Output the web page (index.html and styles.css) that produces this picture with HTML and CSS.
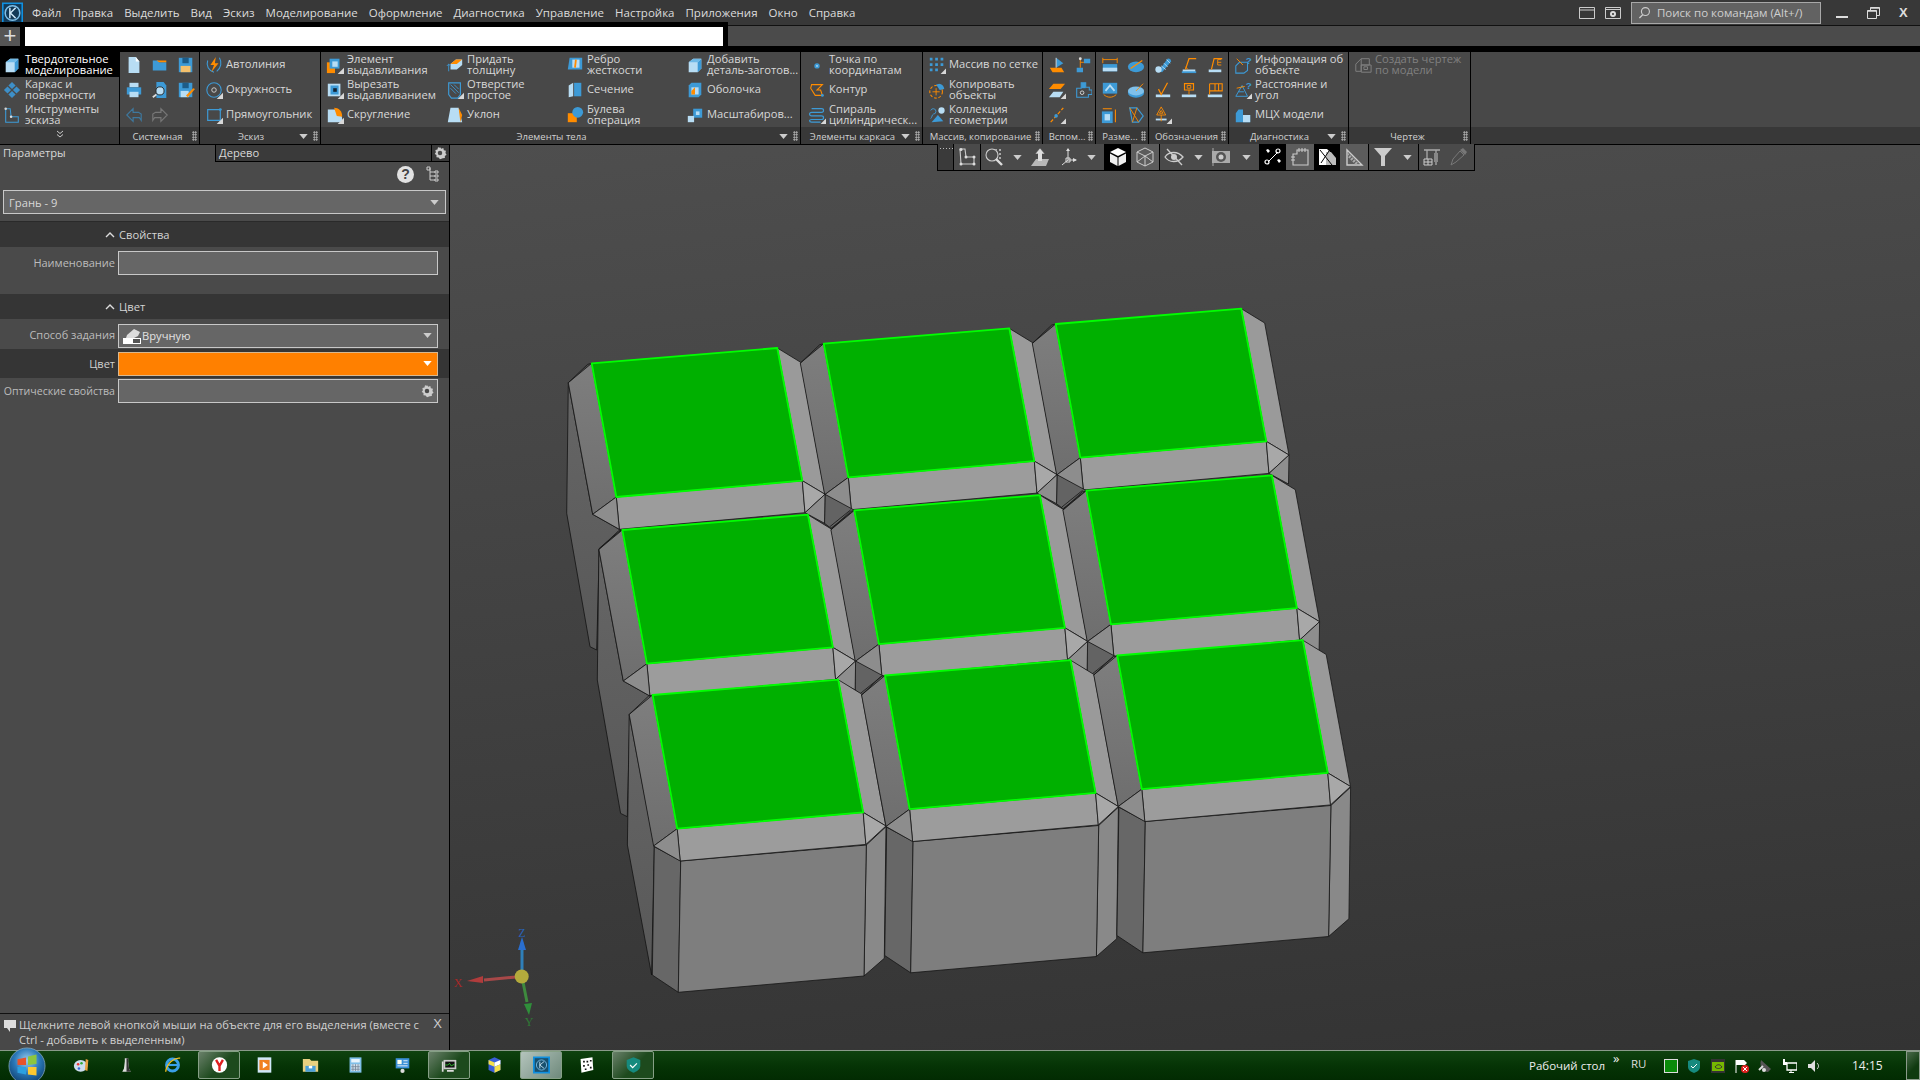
FILE: index.html
```html
<!DOCTYPE html>
<html lang="ru">
<head>
<meta charset="utf-8">
<title>КОМПАС-3D</title>
<link rel="stylesheet" href="styles.css">
</head>
<body>
<svg class="defs" width="0" height="0" aria-hidden="true">
<defs>
<symbol id="solid" viewBox="0 0 20 20"><path d="M3 7l5-4h9v11l-4 4H3z" fill="#b8ddf4"/><path d="M13 18V7l4-4v11z" fill="#3d9ad6"/><path d="M3 7l5-4h9l-4 4z" fill="#6fb9e6"/></symbol>
<symbol id="surf" viewBox="0 0 20 20"><g fill="#3d8fc8"><path d="M10 1l4 4-4 4-4-4z"/><path d="M15 6l4 4-4 4-4-4z"/><path d="M5 6l4 4-4 4-4-4z"/><path d="M10 11l4 4-4 4-4-4z"/></g></symbol>
<symbol id="sk" viewBox="0 0 20 20"><path d="M3 3h5l1 9h8v6H3z" fill="none" stroke="#3d9ad6" stroke-width="1.2"/><circle cx="3" cy="3" r="1.4" fill="#d5d5d5"/><circle cx="9" cy="12" r="1.4" fill="#ddd"/></symbol>
<symbol id="doc" viewBox="0 0 20 20"><path d="M4 1h8l4 5v13H4z" fill="#b8ddf4"/><path d="M12 1l4 5h-4z" fill="#fff"/></symbol>
<symbol id="open" viewBox="0 0 20 20"><path d="M2 5h6l1 2h8v9H2z" fill="#3d9ad6"/><path d="M6 5h11v2H9z" fill="#ff8c00"/></symbol>
<symbol id="save" viewBox="0 0 20 20"><path d="M2 2h15v16H2z" fill="#3d9ad6"/><path d="M6 2h7v6H6z" fill="#1d5c88"/><path d="M4 11h11v7H4z" fill="#f4c06c"/></symbol>
<symbol id="print" viewBox="0 0 20 20"><path d="M5 2h10v5H5z" fill="#b8ddf4"/><path d="M2 7h16v8H2z" fill="#3d9ad6"/><path d="M5 12h10v6H5z" fill="#b8ddf4"/></symbol>
<symbol id="prev" viewBox="0 0 20 20"><path d="M6 1h8l3 4v14H6z" fill="#3d9ad6"/><circle cx="10" cy="11" r="4.5" fill="#b8ddf4" stroke="#222"/><path d="M6 15l-4 3" stroke="#ddd" stroke-width="2"/></symbol>
<symbol id="saveas" viewBox="0 0 20 20"><path d="M2 2h15v16H2z" fill="#3d9ad6"/><path d="M6 2h7v6H6z" fill="#1d5c88"/><path d="M4 11h9v7H4z" fill="#b8ddf4"/><path d="M10 16l8-8 2 1-8 9z" fill="#ff8c00"/></symbol>
<symbol id="undo" viewBox="0 0 20 20"><path d="M9 3L2 10l7 7v-4h7l2 3v-7l-3-2H9z" fill="none" stroke="#3e789e" stroke-width="1.3"/></symbol>
<symbol id="redo" viewBox="0 0 20 20"><path d="M11 3l7 7-7 7v-4H4l-2 3v-7l3-2h6z" fill="none" stroke="#777" stroke-width="1.3"/></symbol>
<symbol id="auto" viewBox="0 0 20 20"><path d="M3 5c-2 6 1 11 7 13M16 2c3 5 2 11-3 15" fill="none" stroke="#3d9ad6" stroke-width="1.2"/><path d="M12 1L6 10h4l-3 8 8-10h-4z" fill="#ff8c00"/></symbol>
<symbol id="circ" viewBox="0 0 20 20"><circle cx="10" cy="10" r="8" fill="none" stroke="#3d9ad6" stroke-width="1.2"/><circle cx="10" cy="10" r="2.5" fill="none" stroke="#d5d5d5"/><path d="M20 13v7h-7z" fill="#d8d8d8"/></symbol>
<symbol id="rect" viewBox="0 0 20 20"><path d="M3 4h14v12H3z" fill="none" stroke="#3d9ad6" stroke-width="1.3"/><circle cx="17" cy="4" r="1.6" fill="#3d9ad6"/><path d="M20 13v7h-7z" fill="#d8d8d8"/></symbol>
<symbol id="ext" viewBox="0 0 20 20"><path d="M1 7h9v12H1z" fill="#ff8c00"/><path d="M4 3h11v11H4z" fill="#3d9ad6"/><path d="M7 6h6v6H7z" fill="#b8ddf4"/><path d="M20 13v7h-7z" fill="#d8d8d8"/></symbol>
<symbol id="cut" viewBox="0 0 20 20"><path d="M2 3h14v14H2z" fill="#b8ddf4"/><path d="M5 5h9v10H5z" fill="#3d9ad6"/><path d="M8 8h4v4H8z" fill="#123"/><path d="M20 13v7h-7z" fill="#d8d8d8"/></symbol>
<symbol id="fil" viewBox="0 0 20 20"><path d="M2 4h8c5 0 8 5 8 12v2H2z" fill="#b8ddf4"/><path d="M9 2c5 0 9 3 9 10l-6-1z" fill="#ff8c00"/><path d="M20 13v7h-7z" fill="#d8d8d8"/></symbol>
<symbol id="thick" viewBox="0 0 20 20"><path d="M5 9l6-5h7v6l-6 5H5z" fill="#b8ddf4"/><path d="M11 4h7l-6 5H5z" fill="#ff8c00"/><path d="M3 17V9M1 11l2-2 2 2" stroke="#3d9ad6" fill="none"/></symbol>
<symbol id="hole" viewBox="0 0 20 20"><path d="M3 2h13v13l-3 4H6l-3-4z" fill="none" stroke="#3d9ad6" stroke-width="1.3"/><path d="M5 4l9 9M9 4l5 5M5 8l6 6" stroke="#3d9ad6"/><path d="M20 13v7h-7z" fill="#d8d8d8"/></symbol>
<symbol id="draft" viewBox="0 0 20 20"><path d="M5 2h9l4 16H2z" fill="#b8ddf4"/><path d="M14 2l4 8-2 8z" fill="#ff8c00"/></symbol>
<symbol id="rib" viewBox="0 0 20 20"><path d="M4 2h14v13H2z" fill="#3d9ad6"/><path d="M7 4h8v9H7z" fill="#b8ddf4"/><path d="M11 4l-1 9" stroke="#ff8c00" stroke-width="2"/></symbol>
<symbol id="sec" viewBox="0 0 20 20"><path d="M3 5l5-3v15l-5 1z" fill="#b8ddf4"/><path d="M9 2h8v15H9z" fill="#3d9ad6"/></symbol>
<symbol id="bool" viewBox="0 0 20 20"><path d="M2 8h10v10H2z" fill="#ff8c00"/><circle cx="13" cy="7" r="6" fill="#3d9ad6"/></symbol>
<symbol id="add" viewBox="0 0 20 20"><path d="M3 7l5-4h9v11l-4 4H3z" fill="#b8ddf4"/><path d="M13 18V7l4-4v11z" fill="#3d9ad6"/><path d="M3 7l5-4h9l-4 4z" fill="#6fb9e6"/></symbol>
<symbol id="shell" viewBox="0 0 20 20"><path d="M3 5l3-3h11v13l-3 3H3z" fill="#3d9ad6"/><path d="M6 7h8v8H6z" fill="#b8ddf4"/><path d="M6 11l4-4v8H6z" fill="#ff8c00"/></symbol>
<symbol id="scale" viewBox="0 0 20 20"><path d="M8 3h10v10H8z" fill="#3d9ad6"/><path d="M11 6h4v4h-4z" fill="#b8ddf4"/><path d="M2 11h7v7H2z" fill="#b8ddf4"/></symbol>
<symbol id="pt" viewBox="0 0 20 20"><circle cx="10" cy="11" r="3" fill="#3d9ad6"/><circle cx="10" cy="11" r="1" fill="#b8ddf4"/></symbol>
<symbol id="cont" viewBox="0 0 20 20"><path d="M4 4h12L10 10h4l2 6H8L3 8z" fill="none" stroke="#ff8c00" stroke-width="1.2"/><circle cx="16" cy="16" r="1.6" fill="#3d9ad6"/></symbol>
<symbol id="spir" viewBox="0 0 20 20"><g fill="none" stroke="#3d9ad6" stroke-width="1.3"><path d="M4 3h11c3 0 3 4 0 4H4c-3 0-3 4 0 4h11c3 0 3 4 0 4H4c-3 0-3 3 0 3h10"/></g><path d="M20 14v6h-6z" fill="#d8d8d8"/></symbol>
<symbol id="grid" viewBox="0 0 20 20"><g fill="#3d9ad6"><path d="M2 2h3v3H2zM8 2h3v3H8zM14 2h3v3h-3zM2 8h3v3H2zM8 8h3v3H8zM14 8h3v3h-3zM2 14h3v3H2zM8 14h3v3H8z"/></g><path d="M20 14v6h-6z" fill="#d8d8d8"/></symbol>
<symbol id="copy" viewBox="0 0 20 20"><circle cx="9" cy="12" r="7" fill="none" stroke="#ff8c00" stroke-dasharray="3 2" stroke-width="1.2"/><path d="M9 4a6 6 0 0 1 9 5l-5 1z" fill="#3d9ad6"/><path d="M9 8v8M5 12h8" stroke="#ff8c00"/></symbol>
<symbol id="coll" viewBox="0 0 20 20"><circle cx="15" cy="5" r="3.5" fill="#b8ddf4"/><path d="M4 18l7-8 6 7z" fill="#3d9ad6"/><path d="M3 5a3 3 0 1 1 3 4c-2 1-1 3-3 5" fill="none" stroke="#3d9ad6"/></symbol>
<symbol id="a1" viewBox="0 0 20 20"><path d="M9 2v11l8-5-8-6z" fill="#3d9ad6"/><path d="M2 13h13l3 5H5z" fill="#ff8c00"/><path d="M9 2v11" stroke="#ddd"/></symbol>
<symbol id="a2" viewBox="0 0 20 20"><path d="M11 3h7v5h-7zM3 13h7v5H3z" fill="#3d9ad6"/><path d="M7 2v11M7 7h4" stroke="#ff8c00" fill="none"/><circle cx="7" cy="3" r="1.6" fill="#ddd"/></symbol>
<symbol id="a3" viewBox="0 0 20 20"><path d="M6 3h13l-5 6H1z" fill="#ff8c00"/><path d="M6 12h11l-4 6H1z" fill="#b8ddf4"/><path d="M20 14v6h-6z" fill="#d8d8d8"/></symbol>
<symbol id="a4" viewBox="0 0 20 20"><path d="M8 2h5v5h4v3l3 0v5h-4v3H3V8h5z" fill="none" stroke="#3d9ad6" stroke-width="1.2"/><path d="M8 2h5v6H8z" fill="#3d9ad6"/><circle cx="9" cy="13" r="2" fill="none" stroke="#ddd"/></symbol>
<symbol id="a5" viewBox="0 0 20 20"><path d="M3 18L17 2" stroke="#ff8c00" stroke-dasharray="4 2" stroke-width="1.3"/><circle cx="9" cy="11" r="2" fill="#3d9ad6"/><path d="M20 14v6h-6z" fill="#d8d8d8"/></symbol>
<symbol id="d1" viewBox="0 0 20 20"><path d="M2 9h16v8H2z" fill="#3d9ad6"/><path d="M2 13h16v4H2z" fill="#b8ddf4"/><path d="M2 2v6M18 2v6M2 4h16" stroke="#ff8c00" fill="none"/></symbol>
<symbol id="d2" viewBox="0 0 20 20"><ellipse cx="10" cy="12" rx="9" ry="6" fill="#3d9ad6"/><path d="M4 14L17 5" stroke="#ff8c00" stroke-width="1.4"/></symbol>
<symbol id="d3" viewBox="0 0 20 20"><path d="M2 2h16v12H2z" fill="#3d9ad6"/><path d="M5 11l5-6 5 6" stroke="#b8ddf4" stroke-width="2" fill="none"/><path d="M3 15c4 4 10 4 14 0" stroke="#ff8c00" fill="none"/></symbol>
<symbol id="d4" viewBox="0 0 20 20"><ellipse cx="10" cy="13" rx="9" ry="5.5" fill="#3d9ad6"/><ellipse cx="10" cy="11" rx="9" ry="5" fill="#7fc0ea"/><path d="M10 11L18 3" stroke="#ff8c00"/></symbol>
<symbol id="d5" viewBox="0 0 20 20"><path d="M1 6h12v13H1z" fill="#3d9ad6"/><path d="M4 9h6v7H4z" fill="#b8ddf4"/><path d="M2 3h10M16 4v14" stroke="#ff8c00" fill="none" stroke-width="1.2"/></symbol>
<symbol id="d6" viewBox="0 0 20 20"><path d="M3 2h8l7 9-5 7H6z" fill="none" stroke="#3d9ad6" stroke-width="1.3"/><path d="M3 2l10 16M11 2l-5 16" stroke="#ff8c00"/></symbol>
<symbol id="o1" viewBox="0 0 20 20"><path d="M5 17L15 3a3 3 0 0 1 4 3L9 18z" fill="#3d9ad6"/><path d="M8 11l5 4M11 8l4 4M14 4l4 4" stroke="#b8ddf4"/><circle cx="5" cy="15" r="3.5" fill="#b8ddf4"/></symbol>
<symbol id="o2" viewBox="0 0 20 20"><path d="M3 15h14v3H3z" fill="#b8ddf4"/><path d="M2 18h16" stroke="#3d9ad6" stroke-width="2"/><path d="M6 15l4-12h8" fill="none" stroke="#ff8c00" stroke-width="1.3"/><path d="M9 15l-3-3" stroke="#ff8c00"/></symbol>
<symbol id="o3" viewBox="0 0 20 20"><path d="M3 15h14v3H3z" fill="#b8ddf4"/><path d="M6 15l3-12h9" fill="none" stroke="#ff8c00" stroke-width="1.3"/><path d="M13 4h4M13 7h4M13 10h4M13 4v6" stroke="#ff8c00"/></symbol>
<symbol id="o4" viewBox="0 0 20 20"><path d="M2 15h16v3H2z" fill="#b8ddf4"/><path d="M5 9l3 6 7-13" fill="none" stroke="#ff8c00" stroke-width="1.4"/></symbol>
<symbol id="o5" viewBox="0 0 20 20"><path d="M2 15h16v3H2z" fill="#b8ddf4"/><path d="M5 3h10v7H5z" fill="none" stroke="#ff8c00" stroke-width="1.3"/><path d="M10 10v5M8 5h4v3H8z" stroke="#ff8c00" fill="none"/></symbol>
<symbol id="o6" viewBox="0 0 20 20"><path d="M2 15h16v3H2z" fill="#b8ddf4"/><path d="M4 3v12M4 3h14v8H4M10 3v8M14 3v8" fill="none" stroke="#ff8c00" stroke-width="1.2"/></symbol>
<symbol id="o7" viewBox="0 0 20 20"><path d="M2 14h12v2H2z" fill="#b8ddf4"/><path d="M8 1l-5 9h10zM8 5l-2 3h4z" fill="none" stroke="#ff8c00"/><path d="M8 10v7" stroke="#ff8c00"/><path d="M20 14v6h-6z" fill="#d8d8d8"/></symbol>
<symbol id="i1" viewBox="0 0 20 20"><path d="M2 11l4-4h9v9l-4 3H2z" fill="none" stroke="#3d9ad6" stroke-width="1.2"/><path d="M3 3l7 7" stroke="#ff8c00"/><text x="13" y="9" font-size="11" font-weight="700" fill="#3d9ad6" font-family="Liberation Sans">?</text></symbol>
<symbol id="i2" viewBox="0 0 20 20"><path d="M2 17L9 5l6 12zM5 12h6" fill="none" stroke="#3d9ad6" stroke-width="1.1"/><path d="M3 8l9-2" stroke="#ff8c00"/><text x="13" y="9" font-size="11" font-weight="700" fill="#3d9ad6" font-family="Liberation Sans">?</text><path d="M20 14v6h-6z" fill="#d8d8d8"/></symbol>
<symbol id="i3" viewBox="0 0 20 20"><path d="M2 8l3-4h5v6h8v8H2z" fill="#3d9ad6"/><path d="M10 10h8v8h-8z" fill="#b8ddf4"/></symbol>
<symbol id="draw" viewBox="0 0 20 20"><g fill="none" stroke="#808080" stroke-width="1.1"><path d="M2 9l6-6v14H2zM8 3h9v7h-9M8 10h11v8H8zM11 12h4v3h-4z"/></g></symbol>
<symbol id="dd" viewBox="0 0 10 6"><path d="M0 0h10L5 6z" fill="#ccc"/></symbol>
<symbol id="gear" viewBox="0 0 16 16"><path d="M8 1l1.4 2 2.4-.6.6 2.4 2.4.7-.6 2.5 1.3 2-2 1.3.1 2.5-2.5.2L8 15l-1.6-1.9-2.5-.2.1-2.5-2-1.3 1.3-2-.6-2.5 2.4-.7.6-2.4 2.4.6z" fill="#ccc"/><circle cx="8" cy="8" r="2.6" fill="#4a4a4a"/></symbol>
<symbol id="t1" viewBox="0 0 20 20"><path d="M3 2h5l1 8h8v7H4z" fill="none" stroke="#ccc" stroke-width="1.1"/><g fill="#ddd"><circle cx="4" cy="2.5" r="1.5"/><circle cx="9" cy="10" r="1.5"/><circle cx="17" cy="10" r="1.5"/><circle cx="17" cy="17" r="1.5"/><circle cx="4" cy="17" r="1.5"/></g></symbol>
<symbol id="t2" viewBox="0 0 20 20"><circle cx="8" cy="8" r="6" fill="none" stroke="#ccc" stroke-width="1.1"/><path d="M12 12l6 6" stroke="#ddd" stroke-width="2.4"/><path d="M15 2h2v2h-2zM15 6h2v2h-2zM15 10h2v2h-2zM11 2h2v2h-2z" fill="#aaa"/></symbol>
<symbol id="t3" viewBox="0 0 20 20"><path d="M10 1l5 6h-3v6H8V7H5z" fill="#ddd" stroke="#4a4a4a" stroke-width=".6"/><path d="M6 12h13l-3 7H1z" fill="#b8b8b8"/><path d="M8 7h4v7H8z" fill="#ddd"/></symbol>
<symbol id="t4" viewBox="0 0 20 20"><path d="M10 2v11M10 13h8M10 13l-6 5" stroke="#ddd" fill="none"/><path d="M8 4l2-3 2 3zM15 11l4 2-4 2z" fill="#ddd"/><path d="M8 11h4v4H8z" fill="none" stroke="#ddd"/></symbol>
<symbol id="cube" viewBox="0 0 20 20"><path d="M10 1l8 4-8 4-8-4z" fill="#fff"/><path d="M2 6.500l7.500 4V19L2 15z" fill="#eee"/><path d="M18 6.500l-7.500 4V19l7.500-4z" fill="#eee"/></symbol>
<symbol id="wire" viewBox="0 0 20 20"><path d="M10 1l8 4v10l-8 4-8-4V5zM2 5l8 4 8-4M10 9v10M2 15l8-6M18 15l-8-6" fill="none" stroke="#ccc"/></symbol>
<symbol id="eye" viewBox="0 0 20 20"><path d="M1 10c4-6 13-6 18 0-5 6-14 6-18 0z" fill="none" stroke="#ccc" stroke-width="1.3"/><circle cx="10" cy="10" r="3" fill="#ccc"/><path d="M3 2l15 16" stroke="#ccc" stroke-width="1.3"/></symbol>
<symbol id="cam" viewBox="0 0 20 20"><path d="M1 4h18v12H1z" fill="#aaa"/><path d="M2 1v4M2 15v4" stroke="#aaa"/><circle cx="10" cy="10" r="5" fill="#555"/><circle cx="10" cy="10" r="2.500" fill="#ccc"/></symbol>
<symbol id="link" viewBox="0 0 20 20"><path d="M5 15L15 5" stroke="#fff"/><g fill="none" stroke="#fff" stroke-width="1.2"><circle cx="15" cy="4" r="2"/><circle cx="4" cy="15" r="2"/></g><path d="M3 3l2-1 2 2-2 2zM14 13l2-1 2 2-2 2z" fill="#fff"/></symbol>
<symbol id="book" viewBox="0 0 20 20"><path d="M3 7h4V3h11v15H3z" fill="none" stroke="#ccc" stroke-width="1.1"/><path d="M9 1v4M12 1v4M15 1v4M1 10h4M1 13h4" stroke="#ccc"/></symbol>
<symbol id="brick" viewBox="0 0 20 20"><path d="M2 2h8l5 5v11H2z" fill="#fff"/><path d="M9 5h5l5 6v7H9z" fill="#bbb"/><path d="M3 3l12 15M4 16l8-12" stroke="#000"/></symbol>
<symbol id="ang" viewBox="0 0 20 20"><path d="M3 3v15h15z" fill="none" stroke="#ccc" stroke-width="1.4"/><path d="M3 7l11 11" stroke="#aaa" stroke-width="3" stroke-dasharray="2 1"/></symbol>
<symbol id="filt" viewBox="0 0 20 20"><path d="M1 1h18l-7 8v10H8V9z" fill="#ccc"/></symbol>
<symbol id="crane" viewBox="0 0 20 20"><path d="M2 3h16M5 3v9M14 3v15" stroke="#aaa" fill="none" stroke-width="1.3"/><path d="M2 12h8v6H2z" fill="none" stroke="#ccc"/><path d="M2 15h8M6 12v6" stroke="#ccc"/><path d="M12 6h4v9h-4z" fill="#888"/></symbol>
<symbol id="pip" viewBox="0 0 20 20"><path d="M3 18l2-6 7-8 4 4-8 7z" fill="none" stroke="#777"/><path d="M12 3l3-2 4 4-2 3z" fill="#777"/></symbol>
<symbol id="grp" viewBox="0 0 16 16"><g fill="none" stroke="#ccc"><path d="M4 2v12M4 6h5M4 10h5M4 14h5"/><path d="M1 1h3v3H1zM9 5h3v2H9zM9 9h3v2H9zM9 13h3v2H9z"/></g></symbol>
</defs>
</svg>

<div class="app">
  <header class="menubar">
    <svg class="logo" viewBox="0 0 20 20"><path d="M0 0h20v20H0z" fill="#1090e0"/><path d="M1.500 1.500h17v17h-17z" fill="#123a58"/><circle cx="10" cy="10" r="7" fill="none" stroke="#7fc0ea" stroke-width="1.4"/><path d="M7.500 5v10M13 5l-5 5 5 5" fill="none" stroke="#cfe8f8" stroke-width="1.4"/></svg>
    <nav class="menu">
      <span>Файл</span><span>Правка</span><span>Выделить</span><span>Вид</span><span>Эскиз</span><span>Моделирование</span><span>Оформление</span><span>Диагностика</span><span>Управление</span><span>Настройка</span><span>Приложения</span><span>Окно</span><span>Справка</span>
    </nav>
    <div class="winside">
      <svg class="wi" viewBox="0 0 16 12"><path d="M.5.500h15v11H.5zM.5 3h15" fill="none" stroke="#ccc"/></svg>
      <svg class="wi wi2" viewBox="0 0 16 12"><path d="M.5.500h15v11H.5z" fill="none" stroke="#ccc"/><path d="M.5 2.500h15" stroke="#ccc"/><circle cx="8" cy="7" r="3" fill="#ddd"/><circle cx="8" cy="7" r="1" fill="#333"/></svg>
      <div class="search"><svg class="mag" viewBox="0 0 14 14"><circle cx="8" cy="6" r="4.300" fill="none" stroke="#ccc" stroke-width="1.2"/><path d="M5 9.500L1.500 13" stroke="#ccc" stroke-width="1.4"/></svg><span>Поиск по командам (Alt+/)</span></div>
      <div class="winbtns">
        <svg class="min" viewBox="0 0 12 12"><path d="M0 10h12" stroke="#ddd" stroke-width="2"/></svg>
        <svg class="max" viewBox="0 0 13 12"><path d="M.5 3.500h9v8h-9zM3.500 3.500V.500h9v8h-3" fill="none" stroke="#ddd"/><path d="M.5 4h9M3.500 1h9" stroke="#ddd" stroke-width="1.500"/></svg>
        <span class="close">X</span>
      </div>
    </div>
  </header>

  <div class="tabbar">
    <div class="tabwrap">
      <div class="plus">+</div>
      <div class="docfield"></div>
    </div>
  </div>

  <div class="ribbon">
    <div class="modes">
      <div class="mode active"><svg class="i"><use href="#solid"/></svg><span>Твердотельное моделирование</span></div>
      <div class="mode"><svg class="i"><use href="#surf"/></svg><span>Каркас и<br>поверхности</span></div>
      <div class="mode"><svg class="i"><use href="#sk"/></svg><span>Инструменты<br>эскиза</span></div>
      <div class="modes-foot"><svg class="chev" viewBox="0 0 8 8"><path d="M1 1l3 2.500L7 1M1 4.500L4 7l3-2.500" fill="none" stroke="#ccc"/></svg></div>
    </div>

    <section class="sec s-sys">
      <div class="body g-sys">
        <svg class="i"><use href="#doc"/></svg><svg class="i"><use href="#print"/></svg><svg class="i"><use href="#undo"/></svg>
        <svg class="i"><use href="#open"/></svg><svg class="i"><use href="#prev"/></svg><svg class="i"><use href="#redo"/></svg>
        <svg class="i"><use href="#save"/></svg><svg class="i"><use href="#saveas"/></svg>
      </div>
      <div class="foot"><span class="lbl">Системная</span><i class="grip"></i></div>
    </section>

    <section class="sec s-skz">
      <div class="body g-col" >
        <div class="ri"><svg class="i"><use href="#auto"/></svg><span>Автолиния</span></div>
        <div class="ri"><svg class="i"><use href="#circ"/></svg><span>Окружность</span></div>
        <div class="ri"><svg class="i"><use href="#rect"/></svg><span>Прямоугольник</span></div>
      </div>
      <div class="foot"><span class="lbl">Эскиз</span><svg class="dd"><use href="#dd"/></svg><i class="grip"></i></div>
    </section>

    <section class="sec s-el">
      <div class="body g-el">
        <div class="ri"><svg class="i"><use href="#ext"/></svg><span>Элемент<br>выдавливания</span></div>
        <div class="ri"><svg class="i"><use href="#cut"/></svg><span>Вырезать<br>выдавливанием</span></div>
        <div class="ri"><svg class="i"><use href="#fil"/></svg><span>Скругление</span></div>
        <div class="ri"><svg class="i"><use href="#thick"/></svg><span>Придать<br>толщину</span></div>
        <div class="ri"><svg class="i"><use href="#hole"/></svg><span>Отверстие<br>простое</span></div>
        <div class="ri"><svg class="i"><use href="#draft"/></svg><span>Уклон</span></div>
        <div class="ri"><svg class="i"><use href="#rib"/></svg><span>Ребро<br>жесткости</span></div>
        <div class="ri"><svg class="i"><use href="#sec"/></svg><span>Сечение</span></div>
        <div class="ri"><svg class="i"><use href="#bool"/></svg><span>Булева<br>операция</span></div>
        <div class="ri"><svg class="i"><use href="#add"/></svg><span>Добавить<br>деталь-заготов...</span></div>
        <div class="ri"><svg class="i"><use href="#shell"/></svg><span>Оболочка</span></div>
        <div class="ri"><svg class="i"><use href="#scale"/></svg><span>Масштабиров...</span></div>
      </div>
      <div class="foot"><span class="lbl">Элементы тела</span><svg class="dd"><use href="#dd"/></svg><i class="grip"></i></div>
    </section>

    <section class="sec s-kar">
      <div class="body g-col">
        <div class="ri"><svg class="i"><use href="#pt"/></svg><span>Точка по<br>координатам</span></div>
        <div class="ri"><svg class="i"><use href="#cont"/></svg><span>Контур</span></div>
        <div class="ri"><svg class="i"><use href="#spir"/></svg><span>Спираль<br>цилиндрическ...</span></div>
      </div>
      <div class="foot"><span class="lbl">Элементы каркаса</span><svg class="dd"><use href="#dd"/></svg><i class="grip"></i></div>
    </section>

    <section class="sec s-mas">
      <div class="body g-col">
        <div class="ri"><svg class="i"><use href="#grid"/></svg><span>Массив по сетке</span></div>
        <div class="ri"><svg class="i"><use href="#copy"/></svg><span>Копировать<br>объекты</span></div>
        <div class="ri"><svg class="i"><use href="#coll"/></svg><span>Коллекция<br>геометрии</span></div>
      </div>
      <div class="foot"><span class="lbl">Массив, копирование</span><i class="grip"></i></div>
    </section>

    <section class="sec s-vs">
      <div class="body g-ico2">
        <svg class="i"><use href="#a1"/></svg><svg class="i"><use href="#a3"/></svg><svg class="i"><use href="#a5"/></svg>
        <svg class="i"><use href="#a2"/></svg><svg class="i"><use href="#a4"/></svg>
      </div>
      <div class="foot"><span class="lbl">Вспом...</span><i class="grip"></i></div>
    </section>

    <section class="sec s-vs">
      <div class="body g-ico2">
        <svg class="i"><use href="#d1"/></svg><svg class="i"><use href="#d3"/></svg><svg class="i"><use href="#d5"/></svg>
        <svg class="i"><use href="#d2"/></svg><svg class="i"><use href="#d4"/></svg><svg class="i"><use href="#d6"/></svg>
      </div>
      <div class="foot"><span class="lbl">Разме...</span><i class="grip"></i></div>
    </section>

    <section class="sec s-obo">
      <div class="body g-ico3">
        <svg class="i"><use href="#o1"/></svg><svg class="i"><use href="#o4"/></svg><svg class="i"><use href="#o7"/></svg>
        <svg class="i"><use href="#o2"/></svg><svg class="i"><use href="#o5"/></svg><span></span>
        <svg class="i"><use href="#o3"/></svg><svg class="i"><use href="#o6"/></svg>
      </div>
      <div class="foot"><span class="lbl">Обозначения</span><i class="grip"></i></div>
    </section>

    <section class="sec s-dia">
      <div class="body g-col">
        <div class="ri"><svg class="i"><use href="#i1"/></svg><span>Информация об<br>объекте</span></div>
        <div class="ri"><svg class="i"><use href="#i2"/></svg><span>Расстояние и<br>угол</span></div>
        <div class="ri"><svg class="i"><use href="#i3"/></svg><span>МЦХ модели</span></div>
      </div>
      <div class="foot"><span class="lbl">Диагностика</span><svg class="dd"><use href="#dd"/></svg><i class="grip"></i></div>
    </section>

    <section class="sec s-dra">
      <div class="body g-col">
        <div class="ri off"><svg class="i"><use href="#draw"/></svg><span>Создать чертеж<br>по модели</span></div>
      </div>
      <div class="foot"><span class="lbl">Чертеж</span><i class="grip"></i></div>
    </section>
    <div class="rib-rest"><div class="rest-foot"></div></div>
  </div>

  <main class="work">
    <aside class="panel">
      <div class="ptabs">
        <div class="ptab on">Параметры</div>
        <div class="ptab">Дерево</div>
        <div class="pgear"><svg class="gear"><use href="#gear"/></svg></div>
      </div>
      <div class="ptools">
        <span class="help">?</span>
        <svg class="grp"><use href="#grp"/></svg>
      </div>
      <div class="combo face"><span>Грань - 9</span><svg class="dd"><use href="#dd"/></svg></div>
      <div class="sep"></div>
      <div class="phead"><svg class="up" viewBox="0 0 10 6"><path d="M1 5l4-4 4 4" fill="none" stroke="#ddd" stroke-width="1.400"/></svg>Свойства</div>
      <div class="prow name"><label>Наименование</label><div class="field"></div></div>
      <div class="gap"></div>
      <div class="phead"><svg class="up" viewBox="0 0 10 6"><path d="M1 5l4-4 4 4" fill="none" stroke="#ddd" stroke-width="1.400"/></svg>Цвет</div>
      <div class="prow way"><label>Способ задания</label>
        <div class="field combo"><svg class="bk" viewBox="0 0 20 16"><path d="M5 7l7-6 6 3-2 4-4 2H4z" fill="#ddd"/><path d="M1 10h18v6H1z" fill="#fff"/><path d="M11 11h7v4h-7z" fill="#555"/></svg><span class="val">Вручную</span><svg class="dd"><use href="#dd"/></svg></div>
      </div>
      <div class="prow colr"><label>Цвет</label><div class="field orange"><svg class="dd white"><use href="#dd"/></svg></div></div>
      <div class="prow opt"><label>Оптические свойства</label><div class="field combo"><svg class="gear g2"><use href="#gear"/></svg></div></div>
      <div class="pfill"></div>
      <div class="hint">
        <svg class="bubble" viewBox="0 0 12 12"><path d="M0 0h12v8H6v4L3 8H0z" fill="#ddd"/></svg>
        <p>Щелкните левой кнопкой мыши на объекте для его выделения (вместе с Ctrl - добавить к выделенным)</p>
        <span class="hx">X</span>
      </div>
    </aside>

    <section class="view">
      <div class="vtools">
        <div class="vgrip"></div>
        <div class="vgroup"><b class="vb"><svg class="vi"><use href="#t1"/></svg></b></div>
        <div class="vgroup g123">
          <b class="vb"><svg class="vi"><use href="#t2"/></svg></b><b class="vd"><svg class="dd"><use href="#dd"/></svg></b>
          <b class="vb"><svg class="vi"><use href="#t3"/></svg></b>
          <b class="vb vb-sp"><svg class="vi"><use href="#t4"/></svg></b><b class="vd"><svg class="dd"><use href="#dd"/></svg></b>
        </div>
        <div class="vgroup g-view">
          <b class="vb act"><svg class="vi"><use href="#cube"/></svg></b>
          <b class="vb hi wide"><svg class="vi"><use href="#wire"/></svg></b>
        </div>
        <div class="vgroup g100">
          <b class="vb wide"><svg class="vi"><use href="#eye"/></svg></b><b class="vd"><svg class="dd"><use href="#dd"/></svg></b>
          <b class="vb"><svg class="vi"><use href="#cam"/></svg></b><b class="vd vd-sp"><svg class="dd"><use href="#dd"/></svg></b>
        </div>
        <div class="vgroup">
          <b class="vb act"><svg class="vi"><use href="#link"/></svg></b>
          <b class="vb hi wide"><svg class="vi"><use href="#book"/></svg></b>
          <b class="vb act"><svg class="vi"><use href="#brick"/></svg></b>
          <b class="vb hi wide"><svg class="vi"><use href="#ang"/></svg></b>
        </div>
        <div class="vgroup g-filt">
          <b class="vb wide"><svg class="vi"><use href="#filt"/></svg></b><b class="vd"><svg class="dd"><use href="#dd"/></svg></b>
        </div>
        <div class="vgroup last">
          <b class="vb"><svg class="vi"><use href="#crane"/></svg></b>
          <b class="vb"><svg class="vi"><use href="#pip"/></svg></b>
        </div>
      </div>

      <svg class="scene" viewBox="450 145 1470 905">
        <defs>
          <linearGradient id="gl" x1="0" y1="0" x2="0" y2="1"><stop offset="0" stop-color="#7e7e7e"/><stop offset="1" stop-color="#6e6e6e"/></linearGradient>
          <linearGradient id="gs" x1="0" y1="0" x2="0" y2="1"><stop offset="0" stop-color="#666"/><stop offset="1" stop-color="#585858"/></linearGradient>
          <g id="side" stroke="#111" stroke-width=".8" stroke-linejoin="round"><polygon points="-23.4,19.4 -25,150 -1.7,283.4 5,286.7 7.600,185 29.300,166.700 27.600,166 1,151" fill="url(#gs)"/></g>
          <g id="side3" stroke="#111" stroke-width=".8" stroke-linejoin="round"><polygon points="-23.4,19.4 -25.200,150 -1,280 1.700,151.700" fill="url(#gs)"/></g>
          <g id="cell" stroke="#151515" stroke-width=".8" stroke-linejoin="round">
            <polygon points="0,0 -23.400,19.400 1,151 24.600,133.700" fill="url(#gl)"/>
            <polyline points="-23.400,19.400 -4,1 0,0" fill="none"/>
            <polygon points="185.600,-15.300 209,-1 233.300,131 210.600,117.400" fill="#9a9a9a"/>
            <polygon points="24.600,133.700 210.600,117.400 213.300,149.400 27.600,166" fill="#9c9c9c"/>
            <polygon points="24.600,133.700 1,151 27.600,166" fill="#8d8d8d"/>
            <polygon points="210.600,117.400 233.300,131 213.300,149.400" fill="#a8a8a8"/>
            <polygon points="0,0 185.600,-15.300 210.600,117.400 24.600,133.700" fill="#00b000" stroke="#00ff00" stroke-width="1.800"/>
          </g>
          <g id="facetL" stroke="#151515" stroke-width=".8" stroke-linejoin="round"><polygon points="213.300,149.400 233.300,131 232.800,160" fill="#8e8e8e"/></g>
          <g id="facetR" stroke="#151515" stroke-width=".8" stroke-linejoin="round"><polygon points="233.300,131 262.300,146.700 239.300,165 232.800,160" fill="#636363"/><polyline points="259,146.500 238,163.500" fill="none"/></g>
          <g id="front" stroke="#151515" stroke-width=".8" stroke-linejoin="round">
            <polygon points="1.700,151.700 28.100,166 25.700,297.300 -.3,280" fill="#676767"/>
            <polygon points="213.700,150 233.400,131.700 231.700,263.300 211.400,281" fill="#898989"/>
            <polygon points="28.100,166 213.700,150 211.400,281 25.700,297.300" fill="#7e7e7e"/>
          </g>
        </defs>

        <use href="#side" x="591.700" y="363.300"/>
        <use href="#side" x="622.300" y="530"/>
        <use href="#side3" x="652.600" y="695"/>

        <use href="#cell" x="591.700" y="363.300"/><use href="#cell" x="823.700" y="343.700"/><use href="#cell" x="1055.700" y="324"/>
        <use href="#facetR" x="591.700" y="363.300"/><use href="#facetL" x="591.700" y="363.300"/>
        <use href="#facetR" x="823.700" y="343.700"/><use href="#facetL" x="823.700" y="343.700"/>
        <use href="#facetL" x="1055.700" y="324"/>

        <use href="#cell" x="622.300" y="530"/><use href="#cell" x="854.300" y="510.400"/><use href="#cell" x="1086.300" y="490.700"/>
        <use href="#facetR" x="622.300" y="530"/><use href="#facetL" x="622.300" y="530"/>
        <use href="#facetR" x="854.300" y="510.400"/><use href="#facetL" x="854.300" y="510.400"/>
        <use href="#facetL" x="1086.300" y="490.700"/>

        <use href="#front" x="652.600" y="695"/><use href="#front" x="885" y="675.500"/><use href="#front" x="1117.200" y="655.500"/>
        <use href="#cell" x="652.600" y="695"/><use href="#cell" x="885" y="675.500"/><use href="#cell" x="1117.200" y="655.500"/>

        <g class="triad">
          <path d="M522 970V950" stroke="#2f7fb8" stroke-width="3"/><path d="M522 937l4 13h-8z" fill="#2a6fd0"/>
          <path d="M516 977l-32 3" stroke="#a84848" stroke-width="3"/><path d="M467 981l16-5v7z" fill="#b03c3c"/>
          <path d="M523 982l4 20" stroke="#3e8a3e" stroke-width="3"/><path d="M529 1015l-5-11 8-1z" fill="#2f8f3a"/>
          <circle cx="521.700" cy="976.500" r="7" fill="#b3aa3c"/>
          <text x="522" y="937" class="ax az">Z</text>
          <text x="458" y="987" class="ax ar">X</text>
          <text x="529" y="1026" class="ax ag">Y</text>
        </g>
      </svg>
    </section>
  </main>

  <footer class="taskbar">
    <svg class="orb" viewBox="0 0 40 40"><defs><radialGradient id="og" cx=".5" cy=".35" r=".7"><stop offset="0" stop-color="#9fd0f0"/><stop offset=".5" stop-color="#2a78b8"/><stop offset="1" stop-color="#0c3a68"/></radialGradient></defs><circle cx="20" cy="20" r="19" fill="url(#og)" stroke="#8ab" stroke-width=".8"/><path d="M10 13l9-2v8h-9z" fill="#e8532b"/><path d="M21 10l9-2v10l-9 1z" fill="#8cc63f"/><path d="M10 21h9v8l-9-2z" fill="#2ba0e0"/><path d="M21 21h9v9l-9-1z" fill="#fdc82f"/></svg>
    <div class="tb">
      <svg class="tk tb-a" viewBox="0 0 20 20"><ellipse cx="9" cy="11" rx="8" ry="7" fill="#cde"/><circle cx="6" cy="9" r="1.500" fill="#e33"/><circle cx="10" cy="8" r="1.500" fill="#3a3"/><circle cx="7" cy="14" r="1.500" fill="#36d"/><path d="M15 3l3 1-1 13-3-1z" fill="#e8a040"/></svg>
      <svg class="tk tb-b" viewBox="0 0 20 20"><path d="M8 2h4v4l1 8 2 4H5l2-4 1-8z" fill="#ddd"/><path d="M10 2h2v4l1 8 2 4h-5z" fill="#333"/></svg>
      <svg class="tk tb-c" viewBox="0 0 20 20"><circle cx="10" cy="10" r="7" fill="none" stroke="#3aa0e8" stroke-width="3.500"/><path d="M4 10h13" stroke="#3aa0e8" stroke-width="2.500"/><path d="M2 18C3 8 12 1 19 2" fill="none" stroke="#f4c020" stroke-width="1.500"/></svg>
      <div class="tbtn tb-d"><svg class="tk" viewBox="0 0 20 20"><circle cx="10" cy="10" r="9" fill="#fff"/><path d="M6 4l4 7 4-7M10 11v6" stroke="#e02020" stroke-width="2.800" fill="none"/></svg></div>
      <svg class="tk tb-e" viewBox="0 0 20 20"><path d="M2 1h16v18H2z" fill="#d0e8f8"/><path d="M4 4h12v12H4z" fill="#f08020"/><path d="M8 6l6 4-6 4z" fill="#fff"/></svg>
      <svg class="tk tb-f" viewBox="0 0 20 20"><path d="M1 3h8l2 2h8v13H1z" fill="#e8d080"/><path d="M4 11h12v7H4z" fill="#4a9fd8"/><path d="M8 11h4v3H8z" fill="#fff"/></svg>
      <svg class="tk tb-g" viewBox="0 0 20 20"><path d="M3 1h14v18H3z" fill="#7fbfe8"/><path d="M5 3h10v4H5z" fill="#e8f4fc"/><path d="M5 9h10v8H5z" fill="#d0e0ec"/><path d="M7 9v8M10 9v8M13 9v8M5 12h10M5 15h10" stroke="#789"/></svg>
      <svg class="tk tb-h" viewBox="0 0 20 20"><path d="M2 2h16v12H2z" fill="#3a90d8"/><path d="M4 4h5v5H4z" fill="#ffe"/><path d="M11 5h5M11 8h5M4 11h12" stroke="#fff"/><circle cx="10" cy="17" r="2.500" fill="#ddd"/></svg>
      <div class="tbtn tb-i"><svg class="tk" viewBox="0 0 20 20"><path d="M3 4h15v11H3z" fill="#ccc"/><path d="M5 6h11v7H5z" fill="#111"/><path d="M5 10l3 0 2-2 2 3 4-2" stroke="#3c3" fill="none"/><path d="M1 6h2v12H1zM7 16h8v2H7z" fill="#ddd"/></svg></div>
      <svg class="tk tb-j" viewBox="0 0 20 20"><path d="M10 1l7 3v12l-7 3-7-3V4z" fill="#3a5fd8"/><path d="M3 4l7 3v5l-7-3z" fill="#f4e04a"/><path d="M17 4l-7 3v5l7-3z" fill="#fff"/><path d="M10 12l7-3v7l-7 3z" fill="#f4e04a"/></svg>
      <div class="tbtn on tb-k"><svg class="tk" viewBox="0 0 20 20"><path d="M0 0h20v20H0z" fill="#1090e0"/><path d="M2 2h16v16H2z" fill="#18506e"/><circle cx="10" cy="10" r="6" fill="none" stroke="#7fc0ea"/><path d="M8 6v8M13 6l-5 4 5 4" fill="none" stroke="#cfe8f8"/></svg></div>
      <svg class="tk tb-l" viewBox="0 0 20 20"><path d="M3 3l14-2 1 15-14 3z" fill="#fff"/><path d="M6 5h2v2H6zM10 5h2v2h-2zM14 4h2v2h-2zM6 10h2v2H6zM11 9h2v2h-2zM8 14h2v2H8zM14 12h2v2h-2z" fill="#111"/></svg>
      <div class="tbtn tb-m"><svg class="tk" viewBox="0 0 20 20"><path d="M10 1l8 3v7c0 4-4 7-8 8-4-1-8-4-8-8V4z" fill="#168a7e"/><path d="M6 10l3 3 5-5" stroke="#fff" fill="none" stroke-width="1.400"/></svg></div>
    </div>
    <div class="tray">
      <span class="desk">Рабочий стол</span>
      <span class="more">»</span>
      <span class="ru">RU</span>
      <svg class="ts t1" viewBox="0 0 14 14"><path d="M0 0h14v14H0z" fill="#ddd"/><path d="M1 1h12v12H1z" fill="#0a8a0a"/></svg>
      <svg class="ts t2" viewBox="0 0 14 14"><path d="M7 0l6 2v6c0 3-3 5-6 6-3-1-6-3-6-6V2z" fill="#168a7e"/><path d="M4 7l2 2 4-4" stroke="#fff" fill="none"/></svg>
      <svg class="ts t3" viewBox="0 0 14 14"><path d="M0 0h14v14H0z" fill="#333"/><path d="M1 3h12v9H1z" fill="#76b900"/><path d="M4 8c2-3 5-3 7 0-2 2-5 2-7 0z" fill="none" stroke="#333"/></svg>
      <svg class="ts t4" viewBox="0 0 14 14"><path d="M1 1v13" stroke="#fff"/><path d="M1 1h8l3 3-2 2H1z" fill="#fff"/><circle cx="10" cy="10" r="4" fill="#e02020"/><path d="M8 8l4 4M12 8l-4 4" stroke="#fff"/></svg>
      <svg class="ts t5" viewBox="0 0 14 14"><path d="M3 1l10 9-3 3c-5 0-9-5-7-12z" fill="#555"/><path d="M1 11l4-4" stroke="#ddd" stroke-width="2"/><circle cx="6" cy="11" r="2" fill="#ddd"/></svg>
      <svg class="ts t6" viewBox="0 0 14 14"><path d="M4 4h10v7H4z" fill="none" stroke="#fff" stroke-width="1.300"/><path d="M8 11v2M6 13.500h5" stroke="#fff"/><path d="M0 0h2v3h2v3H0z" fill="#fff"/></svg>
      <svg class="ts t7" viewBox="0 0 14 14"><path d="M0 5h3l4-4v12L3 9H0z" fill="#ddd"/><path d="M9 4c2 2 2 4 0 6" stroke="#ddd" fill="none"/></svg>
      <span class="clock">14:15</span>
      <div class="showdesk"></div>
    </div>
  </footer>
</div>
</body>
</html>
```
FILE: styles.css
```css
* { box-sizing: border-box; }
html, body { margin: 0; height: 100%; }
body { background: #333; font-family: "Open Sans", "Noto Sans", sans-serif; font-size: 11.5px; color: #d8d8d8; overflow: hidden; }
.defs { position: absolute; }
.app { width: 1920px; height: 1080px; display: flex; flex-direction: column; }

/* title / menu */
.menubar { height: 26px; flex: none; display: flex; align-items: center; background: #383838; border-bottom: 1px solid #111; padding-left: 2px; }
.logo { width: 21px; height: 22px; flex: none; }
.menu { display: flex; gap: 11px; margin-left: 9px; color: #dcdcdc; white-space: nowrap; }
.winside { margin-left: auto; display: flex; align-items: center; height: 100%; }
.wi { width: 16px; height: 12px; }
.wi2 { margin-left: 10px; }
.search { width: 190px; height: 22px; margin-left: 10px; background: #626262; border: 1px solid #a8a8a8; display: flex; align-items: center; gap: 6px; padding-left: 6px; color: #cfcfcf; }
.mag { width: 13px; height: 13px; }
.winbtns { display: flex; align-items: center; width: 99px; padding-left: 15px; gap: 19px; }
.min { width: 12px; height: 12px; }
.max { width: 13px; height: 12px; }
.close { font: 700 13px "Liberation Sans", sans-serif; color: #ddd; }

/* doc tabs */
.tabbar { height: 26px; flex: none; background: #4b4b4b; border-bottom: 6px solid #000; }
.tabwrap { width: 728px; height: 24px; margin-top: -4px; padding: 5px 5px 0 0; background: #000; display: flex; gap: 5px; }
.plus { width: 20px; background: #555; color: #ddd; font: 400 22px/18px "Liberation Sans", sans-serif; text-align: center; }
.docfield { flex: 1; background: #fff; }

/* ribbon */
.ribbon { height: 93px; flex: none; display: flex; background: #484848; border-bottom: 1px solid #000; font-size: 11.2px; }
.modes { width: 120px; flex: none; display: grid; grid-template-rows: 25px 25px 25px 17px; border-right: 1px solid #000; }
.mode { display: flex; align-items: center; gap: 4px; padding-left: 3px; line-height: 11px; color: #d8d8d8; }
.mode span { margin-top: -2px; }
.mode.active { background: #000; color: #fff; }
.modes-foot { background: #383838; display: flex; justify-content: center; align-items: center; }
.chev { width: 8px; height: 8px; margin-top: -4px; }
.i { width: 18px; height: 18px; flex: none; }
.sec { flex: none; display: flex; flex-direction: column; border-right: 1px solid #000; }
.body { height: 75px; display: grid; grid-template-rows: repeat(3, 25px); grid-auto-flow: column; align-items: center; }
.foot { height: 17px; background: #383838; display: flex; align-items: center; font-size: 9.5px; color: #d0d0d0; padding: 1px 2px 0 3px; white-space: nowrap; }
.lbl { flex: 1; text-align: center; }
.dd { width: 9px; height: 5px; flex: none; }
.foot .dd { margin-right: 5px; }
.grip { width: 5px; height: 10px; flex: none; background: radial-gradient(circle, #bbb 0 .8px, transparent 1px) 0 0 / 2.500px 2.500px; }
.ri { display: flex; align-items: center; gap: 3px; line-height: 11px; white-space: nowrap; color: #d8d8d8; }
.ri span { margin-top: -2px; }
.ri.off { color: #808080; }
.s-sys { width: 80px; }
.g-sys { grid-template-columns: repeat(3, 26px); padding-left: 1px; justify-items: center; }
.s-skz { width: 121px; }
.g-col { padding-left: 5px; }
.s-el { width: 480px; }
.g-el { grid-template-columns: repeat(4, 120px); padding-left: 5px; }
.s-kar { width: 122px; }
.s-kar .g-col { padding-left: 7px; }
.s-mas { width: 120px; }
.s-vs { width: 53px; }
.g-ico2 { grid-template-columns: repeat(2, 26px); padding-left: 1px; justify-items: center; }
.s-obo { width: 80px; }
.g-ico3 { grid-template-columns: repeat(3, 26px); padding-left: 1px; justify-items: center; }
.s-dia { width: 120px; }
.s-dra { width: 122px; }
.rib-rest { flex: 1; display: flex; flex-direction: column; justify-content: flex-end; }
.rest-foot { height: 17px; background: #383838; }

/* work area */
.work { flex: 1; display: flex; min-height: 0; }
.panel { width: 450px; flex: none; background: #4a4a4a; border-right: 1px solid #000; display: flex; flex-direction: column; font-size: 11.2px; }
.ptabs { height: 17px; flex: none; display: flex; }
.ptab { width: 216px; padding-left: 3px; line-height: 15px; background: #3a3a3a; border-bottom: 1px solid #000; border-left: 1px solid #000; }
.ptab.on { width: 215px; background: #4a4a4a; border: 0; }
.pgear { flex: 1; background: #3a3a3a; display: flex; justify-content: center; align-items: center; border-left: 1px solid #000; border-bottom: 1px solid #000; padding-right: 2px; }
.gear { width: 14px; height: 14px; }
.ptools { height: 28px; flex: none; display: flex; align-items: center; justify-content: flex-end; gap: 12px; padding: 0 7px 4px 0; }
.help { width: 17px; height: 17px; border-radius: 50%; background: #e2e2e2; color: #444; font: 700 14px/17px "Liberation Sans", sans-serif; text-align: center; }
.grp { width: 16px; height: 16px; }
.combo { display: flex; align-items: center; }
.combo .dd { margin-left: auto; margin-right: 5px; }
.face { height: 24px; flex: none; margin: 0 3px; background: #666; border: 1px solid #c8c8c8; padding-left: 5px; }
.face .dd { margin-right: 6px; }
.sep { height: 8px; flex: none; border-bottom: 1px solid #2a2a2a; box-shadow: inset 0 -2px 0 #4a4a4a; }
.phead { height: 25px; flex: none; background: #353535; display: flex; align-items: center; padding-left: 105px; gap: 4px; color: #d4d4d4; }
.up { width: 10px; height: 6px; }
.prow { display: grid; grid-template-columns: 115px 320px; column-gap: 3px; align-items: center; flex: none; }
.prow label { text-align: right; color: #bcbcbc; white-space: nowrap; font-size: 11px; }
.field { height: 24px; background: #666; border: 1px solid #c8c8c8; }
.name { height: 30px; padding-top: 1px; }
.gap { height: 17px; flex: none; }
.way { height: 30px; padding-top: 3px; }
.way label { margin-top: -2px; }
.colr { height: 29px; background: #353535; }
.colr label { color: #d0d0d0; }
.orange { background: #ff8000; display: flex; align-items: center; justify-content: flex-end; border-color: #d8b890; }
.orange .dd { margin-right: 5px; }
.white { filter: brightness(1.400); }
.opt { height: 27px; padding-bottom: 1px; }
.opt label { font-size: 10.6px; }
.bk { width: 20px; height: 16px; margin-left: 3px; flex: none; }
.val { color: #e2e2e2; }
.g2 { margin-left: auto; margin-right: 3px; }
.pfill { flex: 1; }
.hint { height: 37px; flex: none; border-top: 1px solid #111; background: #484848; display: flex; padding: 3px 6px 0 4px; gap: 3px; position: relative; font-size: 11.2px; }
.bubble { width: 12px; height: 12px; flex: none; margin-top: 3px; }
.hint p { margin: 0; width: 410px; line-height: 15px; color: #d0d0d0; }
.hx { position: absolute; right: 7px; top: 2px; font: 400 13px "Liberation Sans", sans-serif; color: #ccc; }

/* viewport */
.view { flex: 1; position: relative; background: linear-gradient(174deg, #4e4e4e 0%, #333 100%); }
.scene { display: block; width: 100%; height: 100%; }
.ax { font: 400 12px "Liberation Serif", serif; text-anchor: middle; }
.az { fill: #2a62b8; }
.ar { fill: #a52828; }
.ag { fill: #2f7a36; }
.vtools { position: absolute; left: 487px; top: -1px; width: 538px; height: 27px; display: flex; border: 1px solid #000; border-top: 0; background: #4a4a4a; }
.vgrip { width: 15px; flex: none; background-color: #3a3a3a; background-image: radial-gradient(circle, #bbb 0 .8px, transparent 1px); background-size: 3px 3px; background-repeat: repeat-x; background-position: 1px 3px; }
.vgroup { display: flex; border-left: 1px solid #000; height: 100%; flex: none; }
.vb { width: 26px; display: flex; align-items: center; justify-content: center; flex: none; }
.vb.wide { width: 28px; }
.vb-sp { margin-left: 2px; }
.vb.act { background: #000; }
.vb.hi { background: #5c5c5c; }
.vd { width: 20px; display: flex; align-items: center; justify-content: center; flex: none; }
.vd-sp { margin-left: 2px; }
.vi { width: 20px; height: 20px; }
.g123 { width: 124px; }
.g-view { width: 55px; }
.g100 { width: 100px; }
.g-filt { width: 50px; }
.last { flex: 1; }

/* taskbar */
.taskbar { height: 30px; flex: none; position: relative; display: flex; align-items: center; background: linear-gradient(180deg, #0f420f 0%, #053305 55%, #022b02 100%); border-top: 1px solid #8a9a8a; }
.orb { position: absolute; left: 8px; top: -4px; width: 38px; height: 38px; }
.tb { position: absolute; left: 0; top: 0; height: 100%; }
.tk { width: 17px; height: 20px; }
.tb > .tk, .tbtn { position: absolute; top: 4px; }
.tbtn { top: 0; height: 28px; width: 42px; display: flex; align-items: center; justify-content: center; border: 1px solid #86a086; border-radius: 2px; background: linear-gradient(135deg, #6a806a, #1d4a1d 55%); }
.tbtn.on { background: linear-gradient(135deg, #b4c4bc, #6f8a7c); }
.tb-a { left: 73px; } .tb-b { left: 118px; } .tb-c { left: 164px; } .tb-d { left: 198px; }
.tb-e { left: 256px; } .tb-f { left: 302px; } .tb-g { left: 347px; } .tb-h { left: 394px; }
.tb-i { left: 428px; } .tb-j { left: 486px; } .tb-k { left: 520px; } .tb-l { left: 578px; } .tb-m { left: 612px; }
.tray { margin-left: auto; width: 391px; height: 100%; display: flex; align-items: center; position: relative; color: #eee; }
.desk { white-space: nowrap; }
.more { position: absolute; left: 84px; top: 1px; font-size: 13px; line-height: 12px; }
.ru { position: absolute; left: 102px; top: 5px; color: #ddd; }
.ts { position: absolute; top: 8px; width: 14px; height: 14px; }
.t1 { left: 135px; } .t2 { left: 158px; } .t3 { left: 182px; } .t4 { left: 206px; } .t5 { left: 229px; } .t6 { left: 254px; } .t7 { left: 279px; }
.clock { position: absolute; left: 323px; font-size: 12px; }
.showdesk { position: absolute; right: 0; top: 0; width: 14px; height: 100%; border: 1px solid #8a9a8a; background: linear-gradient(135deg, #4a6a4a, #0f3a0f 60%); }
```
